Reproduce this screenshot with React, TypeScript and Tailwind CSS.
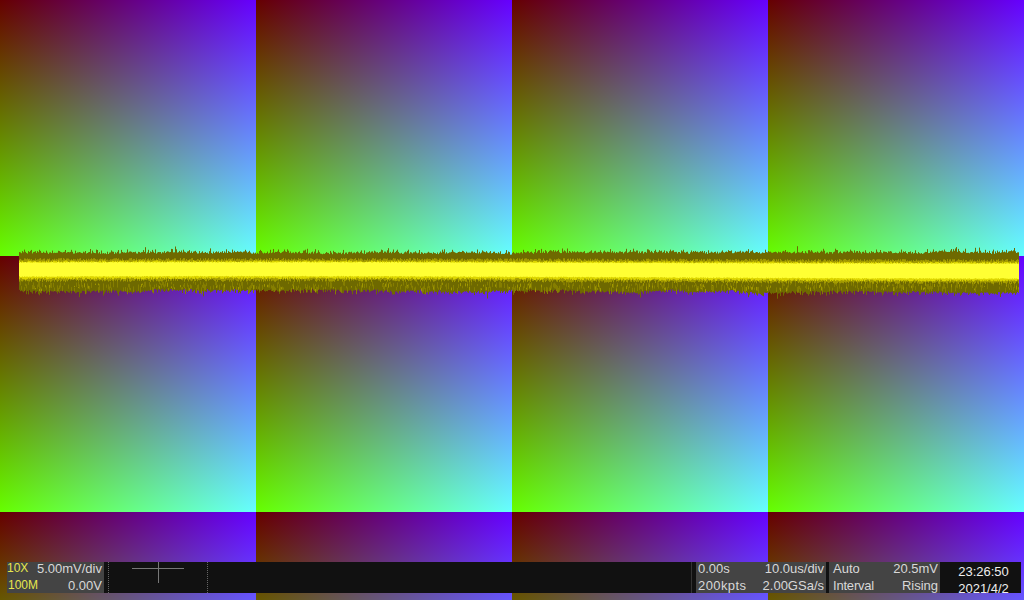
import React from "react";

function rng(seed: number) {
  let s = seed;
  return () => {
    s = (s * 1664525 + 1013904223) >>> 0;
    return s / 4294967296;
  };
}

function buildWave() {
  const r = rng(12345);
  const outer: string[] = [];
  const mid: string[] = [];
  const bright: string[] = [];
  const core: string[] = [];
  const speck: string[] = [];
  const fringe: string[] = [];
  let nt = 0;
  let nb = 0;
  for (let i = 0; i < 1000; i++) {
    const x = 19.5 + i;
    const drift = -1.2 * Math.cos((i - 230) / 250);
    nt = nt * 0.93 + (r() - 0.5) * 0.55;
    nb = nb * 0.95 + (r() - 0.5) * 0.6;
    let top = 253.5 - r() * 2 + nt;
    if (r() < 0.3) top -= r() * 3;
    if (r() < 0.05) top -= r() * 4;
    let bot = 290.5 + r() * 2 + nb + drift * 0.8;
    if (r() < 0.3) bot += r() * 3;
    if (r() < 0.05) bot += r() * 4;
    outer.push(`M${x} ${top.toFixed(1)}V${bot.toFixed(1)}`);
    const mt = 258.5 + drift * 0.5 + r() * 2.5;
    const mb = 280 + drift + r() * 3;
    mid.push(`M${x} ${mt.toFixed(1)}V${mb.toFixed(1)}`);
    const bt = 261 + drift * 0.6 + r() * 1.8;
    const bb = 278.5 + drift + r() * 2;
    bright.push(`M${x} ${bt.toFixed(1)}V${bb.toFixed(1)}`);
    const ct = 262.5 + drift * 0.6 + r() * 0.8;
    const cb = 277 + drift + r() * 0.8;
    core.push(`M${x} ${ct.toFixed(1)}V${cb.toFixed(1)}`);
    if (r() < 0.5) {
      const sy = 281 + r() * 7;
      speck.push(`M${x} ${sy.toFixed(1)}v${(2 + r() * 5).toFixed(1)}`);
    }
    if (r() < 0.12) {
      const sy = 283 + r() * 6;
      fringe.push(`M${x} ${sy.toFixed(1)}v${(1 + r() * 3).toFixed(1)}`);
    }
  }
  return {
    outer: outer.join(""),
    mid: mid.join(""),
    bright: bright.join(""),
    core: core.join(""),
    speck: speck.join(""),
    fringe: fringe.join(""),
  };
}

const wave = buildWave();

function Waveform() {
  return (
    <svg className="absolute left-0 top-0" width={1024} height={600} viewBox="0 0 1024 600" fill="none" strokeWidth={1}>
      <path d={wave.outer} stroke="#6e6900" />
      <path d={wave.speck} stroke="#857e00" />
      <path d={wave.fringe} stroke="#a09800" />
      <path d={wave.mid} stroke="#a39b00" />
      <path d={wave.bright} stroke="#dcd500" />
      <path d={wave.core} stroke="#ffff33" />
    </svg>
  );
}

function Dots({ className }: { className: string }) {
  return <div className={`absolute top-0 h-full w-px border-l border-dotted border-[#666] ${className}`} />;
}

export default function App() {
  return (
    <div className="relative flex h-[600px] w-[1024px] flex-col justify-end overflow-hidden bg-[#660000] bg-[linear-gradient(to_right,#000,#00f),linear-gradient(to_bottom,#000,#0f0)] bg-[length:256px_256px] bg-blend-screen pb-[7px] font-['Liberation_Sans',sans-serif] text-[13px] leading-[17px] text-[#d8d8d8]">
      <Waveform />
      <div className="relative ml-[7px] flex h-[31px] w-[1014px]">
        <div className="w-[97px] bg-[#444] pr-[2px]">
          <div className="-mt-[2px] flex flex-col">
            <div className="flex justify-between"><span className="text-[12px] text-[#e6e64d]">10X</span><span>5.00mV/div</span></div>
            <div className="flex justify-between"><span className="pl-px text-[12px] text-[#e6e64d]">100M</span><span>0.00V</span></div>
          </div>
        </div>
        <div className="relative w-[587px] bg-[#111]">
          <Dots className="left-[4px]" />
          <Dots className="left-[103px]" />
          <div className="absolute left-[28px] top-[6px] h-px w-[52px] bg-[#777]" />
          <div className="absolute left-[54px] top-0 h-[21px] w-px bg-[#777]" />
        </div>
        <div className="w-[5px] border-l border-[#333] bg-[#111]" />
        <div className="w-[130px] bg-[#444] px-[2px]">
          <div className="-mt-[2px] flex flex-col">
            <div className="flex justify-between"><span>0.00s</span><span>10.0us/div</span></div>
            <div className="flex justify-between"><span className="tracking-[0.4px]">200kpts</span><span>2.00GSa/s</span></div>
          </div>
        </div>
        <div className="w-[3px] bg-[#111]" />
        <div className="w-[111px] bg-[#444] pl-[4px] pr-[2px]">
          <div className="-mt-[2px] flex flex-col">
            <div className="flex justify-between"><span>Auto</span><span>20.5mV</span></div>
            <div className="flex justify-between"><span className="tracking-[-0.2px]">Interval</span><span>Rising</span></div>
          </div>
        </div>
        <div className="flex w-[81px] flex-col items-center bg-[#111] pl-[6px] pt-[1px] text-[#eee]">
          <span>23:26:50</span>
          <span>2021/4/2</span>
        </div>
      </div>
    </div>
  );
}
